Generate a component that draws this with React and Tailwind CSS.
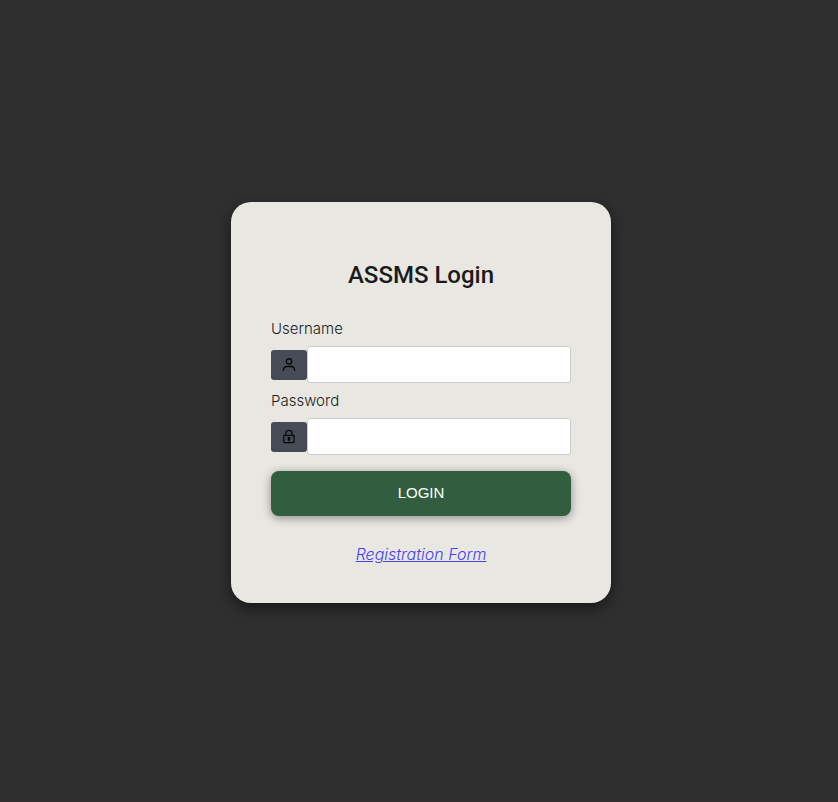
import React from "react";

function UserIcon() {
  return (
    <svg viewBox="0 0 16 16" className="size-4" fill="none" stroke="#08090b" strokeWidth="1.4" strokeLinecap="round" aria-hidden="true">
      <circle cx="8" cy="4.4" r="2.7" />
      <path d="M2.4 13.4v-.4A3.5 3.5 0 0 1 5.9 9.5h4.2a3.5 3.5 0 0 1 3.5 3.5v.4" />
    </svg>
  );
}

function LockIcon() {
  return (
    <svg viewBox="0 0 16 16" className="size-4" fill="none" stroke="#08090b" strokeWidth="1.3" aria-hidden="true">
      <rect x="2.8" y="6.4" width="10.2" height="7.2" rx="0.6" />
      <path d="M4.8 6.4V4.4a3.1 3.1 0 0 1 6.2 0v2" />
      <circle cx="8" cy="9.4" r="0.9" fill="#08090b" />
      <path d="M8 9.6v2.8" />
    </svg>
  );
}

function Field({ id, label, type, icon }) {
  return (
    <div className="pb-2">
      <label htmlFor={id} className="block pb-[7px] text-[15px] leading-5 font-light">
        {label}
      </label>
      <div className="flex items-center">
        <span className="flex h-[30px] w-9 shrink-0 items-center justify-center rounded-[3px] bg-[#474b55]">
          {icon}
        </span>
        <input
          id={id}
          name={id}
          type={type}
          className="h-[37px] min-w-0 flex-1 rounded-[3px] border border-[#cccccc] bg-white px-2 text-base outline-none"
        />
      </div>
    </div>
  );
}

export default function App() {
  return (
    <div className="flex min-h-screen flex-col border-b-3 border-[#322e30] bg-[#2f2f2f] font-['Inter','Liberation_Sans',sans-serif] text-[#1b1b1d]">
      <main className="flex flex-1 items-center justify-center pt-1.5 pl-1">
        <form
          className="w-full max-w-[380px] rounded-[20px] bg-[#e8e7e2] px-10 pt-[57px] pb-[39px] shadow-[0_5px_15px_rgba(0,0,0,0.5)]"
          onSubmit={(event) => event.preventDefault()}
        >
          <h1 className="pb-7 text-center text-2xl leading-8 font-medium font-['Roboto',sans-serif]">ASSMS Login</h1>
          <Field id="username" label="Username" type="text" icon={<UserIcon />} />
          <Field id="password" label="Password" type="password" icon={<LockIcon />} />
          <button
            type="submit"
            className="mt-2 block h-[45px] w-full rounded-lg bg-[#305e3f] text-[15px] text-white shadow-[0_2px_10px_rgba(0,0,0,0.4)] font-['Liberation_Sans',sans-serif]"
          >
            LOGIN
          </button>
          <p className="pt-7 text-center text-base leading-5 font-light">
            <a href="#register" className="text-[#4541f2] italic underline">
              Registration Form
            </a>
          </p>
        </form>
      </main>
    </div>
  );
}
